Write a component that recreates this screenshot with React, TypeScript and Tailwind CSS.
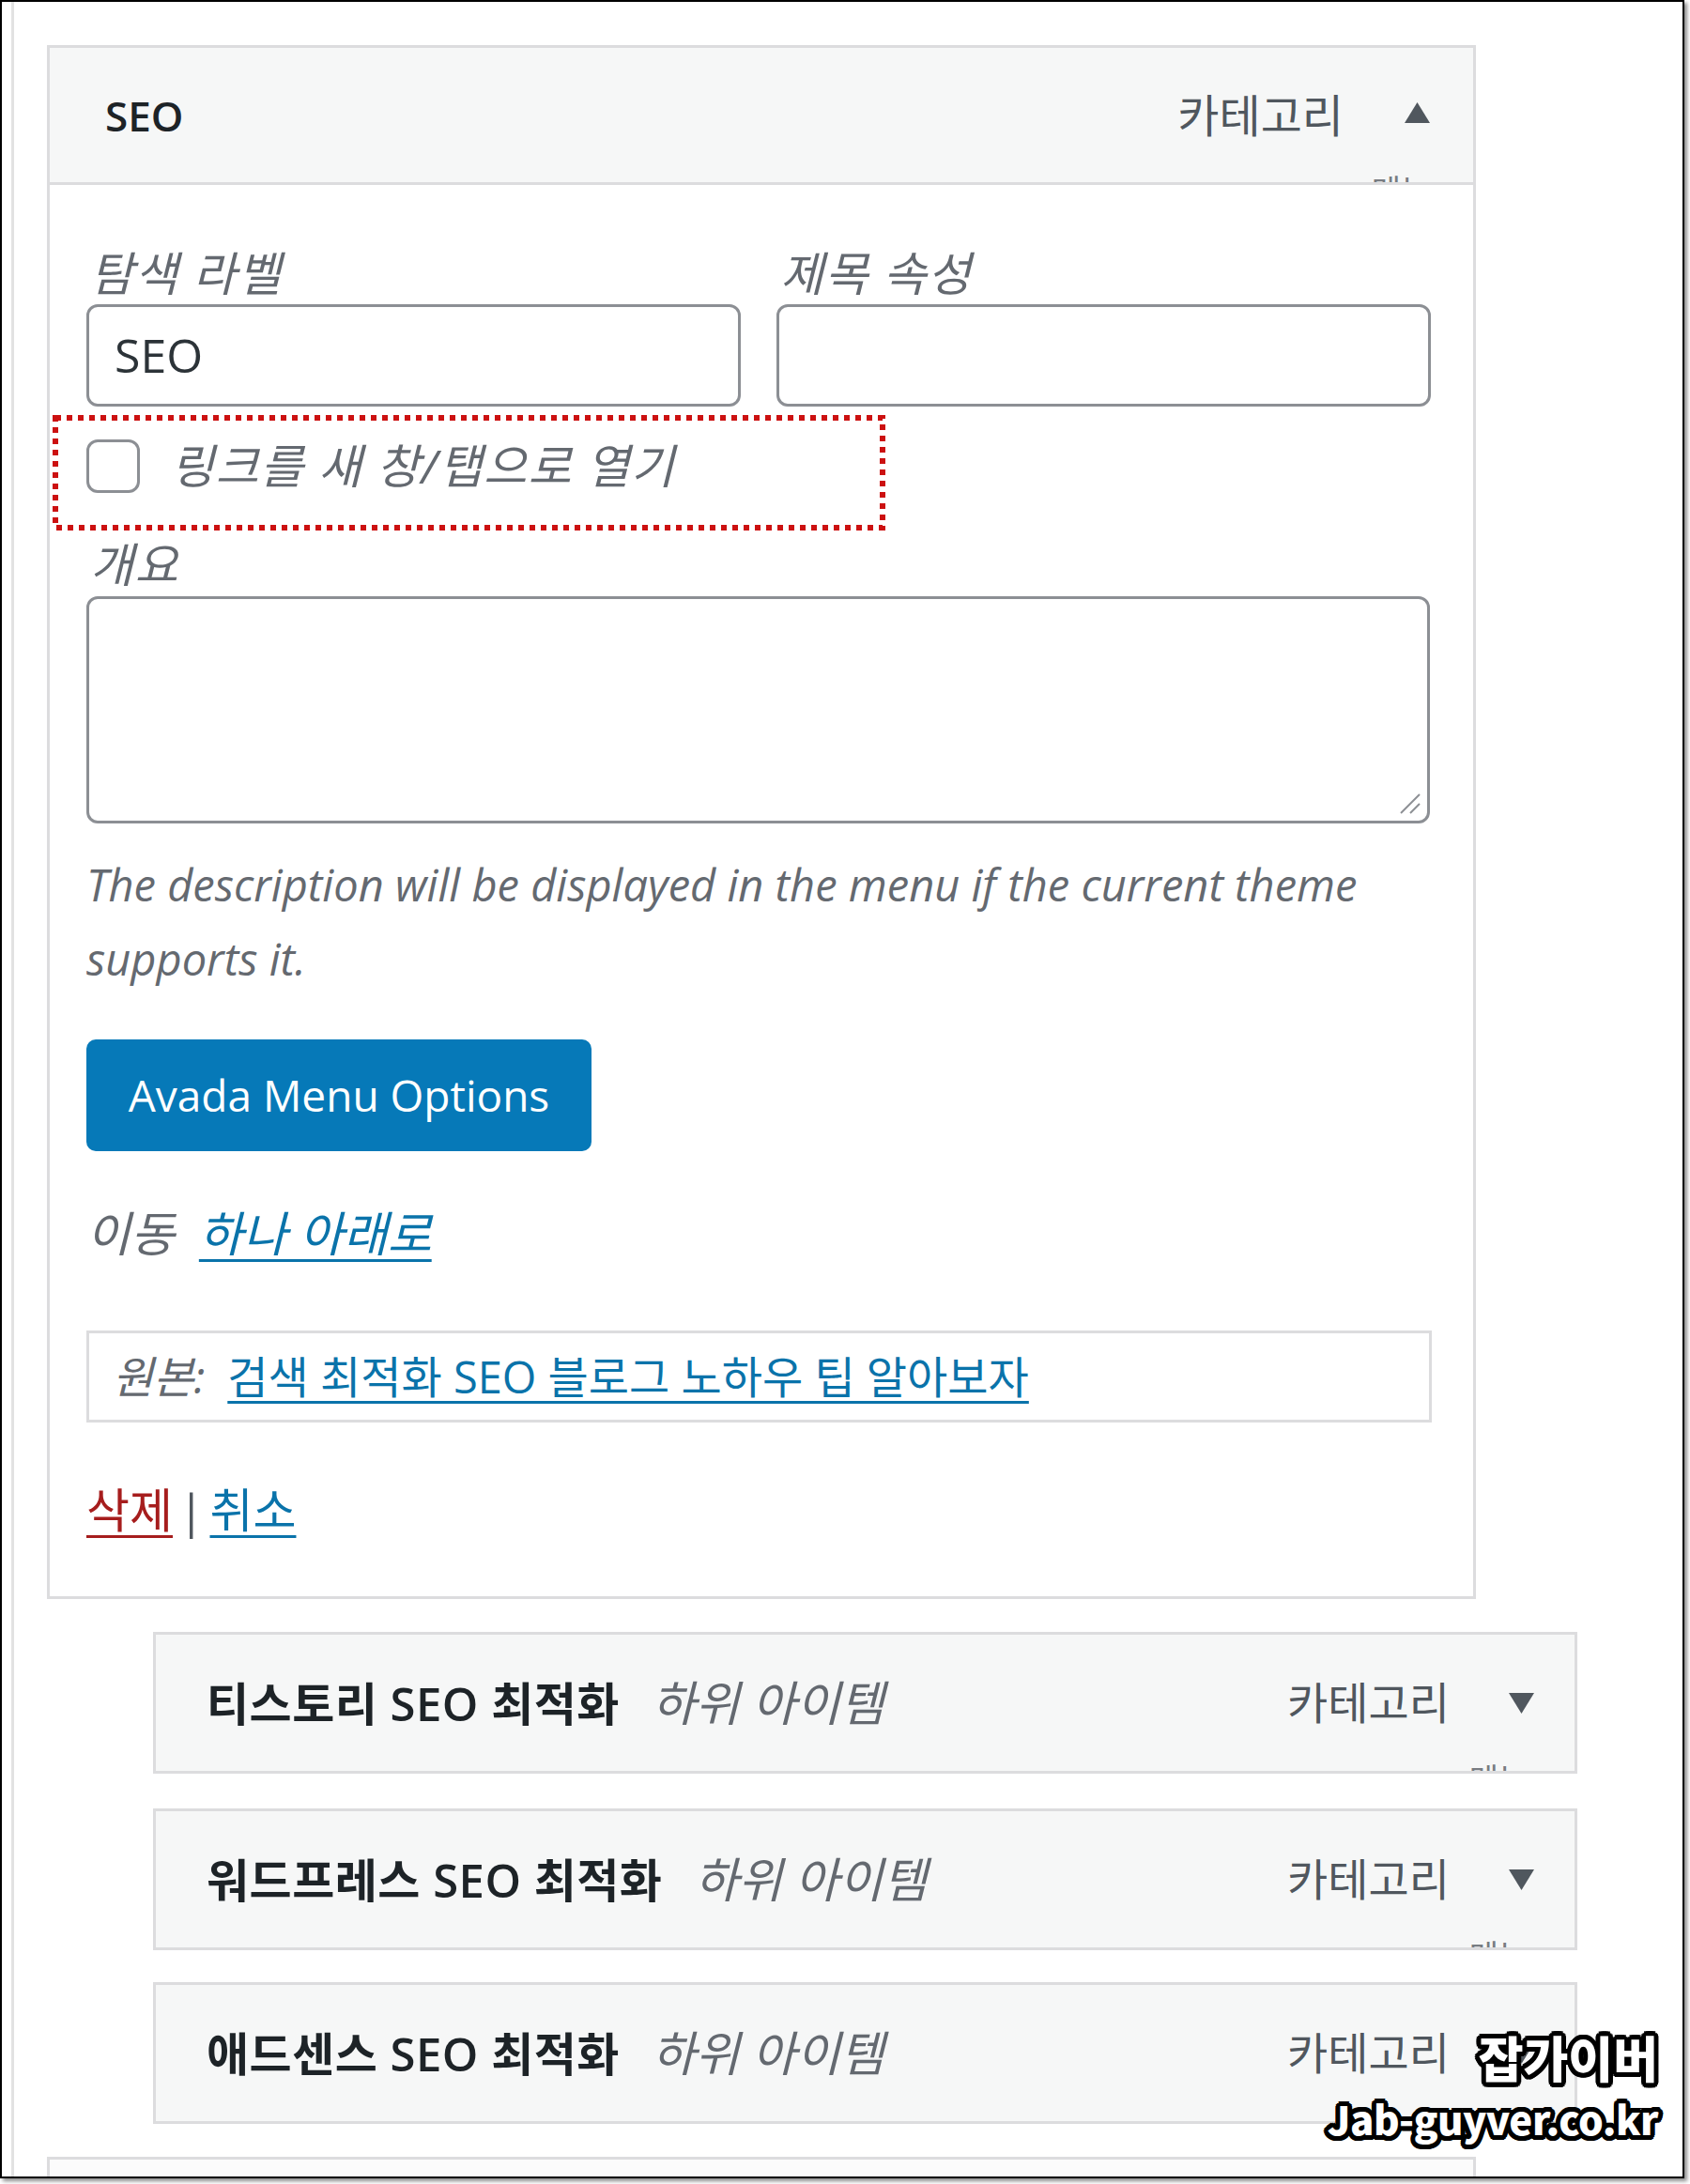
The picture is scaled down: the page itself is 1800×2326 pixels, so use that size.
import React from "react";

const FONT = "font-['Open_Sans','Noto_Sans_CJK_KR',sans-serif]";

function Tri({ up }: { up?: boolean }) {
  return (
    <svg width="27" height="22" viewBox="0 0 27 22" className="shrink-0">
      <path d={up ? "M13.5 0 L27 22 L0 22 Z" : "M0 0 L27 0 L13.5 22 Z"} fill="#50575e" />
    </svg>
  );
}

function Frag({ right }: { right: string }) {
  return (
    <div className={`absolute bottom-0 ${right} h-[8px] overflow-hidden`}>
      <div className="text-[34px] leading-[34px] text-[#787c82]">메뉴 ·</div>
    </div>
  );
}

function Item({ title, mt }: { title: string; mt: string }) {
  return (
    <div
      className={`relative ml-[113px] ${mt} flex h-[151px] w-[1517px] items-center justify-between border-[3px] border-[#dcdcde] bg-[#f6f7f7] pl-[54px] pr-[43px]`}
    >
      <div className="flex items-baseline whitespace-nowrap">
        <span className="text-[49px] font-semibold tracking-[0.5px] text-[#1d2327]">{title}</span>
        <span className="ml-[34px] text-[51px] italic text-[#646970]">하위 아이템</span>
      </div>
      <div className="flex items-center gap-[63px]">
        <span className="text-[47px] text-[#50575e]">카테고리</span>
        <Tri />
      </div>
      <Frag right="right-[32px]" />
    </div>
  );
}

const OUTLINE =
  "[text-shadow:5px_0_0_#000,4.6px_1.9px_0_#000,3.5px_3.5px_0_#000,1.9px_4.6px_0_#000,0_5px_0_#000,-1.9px_4.6px_0_#000,-3.5px_3.5px_0_#000,-4.6px_1.9px_0_#000,-5px_0_0_#000,-4.6px_-1.9px_0_#000,-3.5px_-3.5px_0_#000,-1.9px_-4.6px_0_#000,0_-5px_0_#000,1.9px_-4.6px_0_#000,3.5px_-3.5px_0_#000,4.6px_-1.9px_0_#000,2px_0_0_#000,-2px_0_0_#000,0_2px_0_#000,0_-2px_0_#000]";

export default function App() {
  return (
    <div className={`relative h-[2326px] w-[1800px] overflow-hidden bg-white ${FONT}`}>
      <div className="h-[2320px] w-[1794px] overflow-hidden border-2 border-black bg-white shadow-[3px_3px_4px_rgba(0,0,0,0.45)]">
        <div className="ml-[10px] h-full border-l-[3px] border-[#e2e2e2] pl-[35px] pt-[46px]">
          {/* Expanded SEO menu item */}
          <div className="w-[1522px] border-[3px] border-[#dcdcde] bg-white">
            <div className="relative flex h-[146px] items-center justify-between border-b-[3px] border-[#dcdcde] bg-[#f6f7f7] pl-[59px] pr-[46px]">
              <span className="text-[44px] font-semibold text-[#1d2327]">SEO</span>
              <div className="flex items-center gap-[65px]">
                <span className="text-[48px] text-[#50575e]">카테고리</span>
                <div className="-mt-[6px]">
                  <Tri up />
                </div>
              </div>
              <Frag right="right-[28px]" />
            </div>

            <div className="pb-[62px] pl-[39px] pt-[65px]">
              <div className="grid w-[1432px] grid-cols-2 gap-x-[38px]">
                <div>
                  <div className="h-[58px] pl-[4px] text-[50px] italic leading-[58px] tracking-[1.5px] text-[#646970]">탐색 라벨</div>
                  <div className="mt-[4px] flex h-[109px] items-center rounded-[12px] border-[3px] border-[#8c8f94] pl-[27px] text-[50px] text-[#2c3338]">
                    SEO
                  </div>
                </div>
                <div>
                  <div className="h-[58px] pl-[4px] text-[50px] italic leading-[58px] tracking-[1.5px] text-[#646970]">제목 속성</div>
                  <div className="mt-[4px] h-[109px] rounded-[12px] border-[3px] border-[#8c8f94]" />
                </div>
              </div>

              <div className="relative -ml-[36px] mt-[9px] flex h-[123px] w-[887px] items-center pb-[14px] pl-[36px]">
                <svg className="absolute left-0 top-0" width="887" height="123" viewBox="0 0 887 123">
                  <rect x="3" y="3" width="881" height="117" fill="none" stroke="#cc1111" strokeWidth="6" strokeDasharray="6 6" />
                </svg>
                <div className="h-[57px] w-[57px] shrink-0 rounded-[12px] border-[3px] border-[#8c8f94] bg-white" />
                <span className="ml-[33px] whitespace-nowrap text-[50px] italic tracking-[1.5px] text-[#646970]">링크를 새 창/탭으로 열기</span>
              </div>

              <div className="mt-[7px] h-[58px] pl-[4px] text-[50px] italic leading-[58px] tracking-[1.5px] text-[#646970]">개요</div>
              <div className="relative mt-[5px] h-[242px] w-[1431px] rounded-[12px] border-[3px] border-[#8c8f94]">
                <svg className="absolute bottom-[6px] right-[6px]" width="24" height="24" viewBox="0 0 24 24">
                  <line x1="22" y1="2" x2="2" y2="22" stroke="#8c8f94" strokeWidth="2" />
                  <line x1="22" y1="12" x2="12" y2="22" stroke="#8c8f94" strokeWidth="2" />
                </svg>
              </div>

              <div className="mt-[26px] text-[47px] italic leading-[79px] text-[#646970]">
                <div className="whitespace-nowrap">The description will be displayed in the menu if the current theme</div>
                <div className="whitespace-nowrap">supports it.</div>
              </div>

              <div className="mt-[46px] flex h-[119px] w-[538px] items-center justify-center rounded-[10px] bg-[#0679b8] text-[46px] text-white">
                Avada Menu Options
              </div>

              <div className="mt-[57px] h-[60px] whitespace-nowrap text-[51px] italic leading-[60px] text-[#646970]">
                이동
                <span className="ml-[26px] text-[#0a73aa] underline decoration-[3px] underline-offset-[8px]">하나 아래로</span>
              </div>

              <div className="mt-[74px] flex h-[98px] w-[1433px] items-center whitespace-nowrap border-[3px] border-[#dcdcde] pl-[25px] text-[47px]">
                <span className="italic text-[#646970]">원본:</span>
                <span className="ml-[24px] text-[#0a73aa] underline decoration-[3px] underline-offset-[8px]">
                  검색 최적화 SEO 블로그 노하우 팁 알아보자
                </span>
              </div>

              <div className="mt-[63px] h-[60px] whitespace-nowrap text-[50px] leading-[60px] text-[#50575e]">
                <span className="text-[#a61d1d] underline decoration-[3px] underline-offset-[8px]">삭제</span>
                <span className="mx-[6px]">|</span>
                <span className="text-[#0a73aa] underline decoration-[3px] underline-offset-[8px]">취소</span>
              </div>
            </div>
          </div>

          <Item title="티스토리 SEO 최적화" mt="mt-[35px]" />
          <Item title="워드프레스 SEO 최적화" mt="mt-[37px]" />
          <Item title="애드센스 SEO 최적화" mt="mt-[34px]" />

          <div className="mt-[35px] h-[120px] w-[1522px] border-[3px] border-[#dcdcde] bg-[#fbfbfb]" />
        </div>
      </div>

      {/* watermark */}
      <div className="absolute right-[34px] top-[2158px] flex flex-col items-end font-['Noto_Sans_CJK_KR',sans-serif] font-black text-white">
        <div className={`text-[52px] leading-[66px] ${OUTLINE}`}>잡가이버</div>
        <div className={`mt-[6px] text-[42px] leading-[52px] tracking-[-0.5px] ${OUTLINE}`}>Jab-guyver.co.kr</div>
      </div>
    </div>
  );
}
